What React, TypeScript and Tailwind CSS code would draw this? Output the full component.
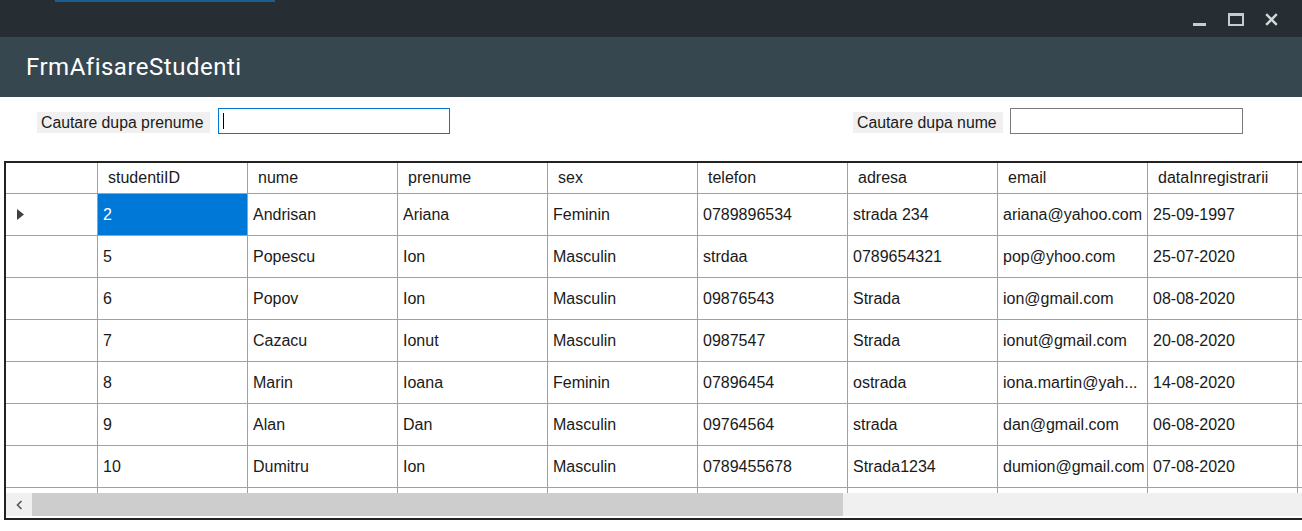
import React from "react";

const cols = ["studentiID", "nume", "prenume", "sex", "telefon", "adresa", "email", "dataInregistrarii"];
const rows = [
  ["2", "Andrisan", "Ariana", "Feminin", "0789896534", "strada 234", "ariana@yahoo.com", "25-09-1997"],
  ["5", "Popescu", "Ion", "Masculin", "strdaa", "0789654321", "pop@yhoo.com", "25-07-2020"],
  ["6", "Popov", "Ion", "Masculin", "09876543", "Strada", "ion@gmail.com", "08-08-2020"],
  ["7", "Cazacu", "Ionut", "Masculin", "0987547", "Strada", "ionut@gmail.com", "20-08-2020"],
  ["8", "Marin", "Ioana", "Feminin", "07896454", "ostrada", "iona.martin@yah...", "14-08-2020"],
  ["9", "Alan", "Dan", "Masculin", "09764564", "strada", "dan@gmail.com", "06-08-2020"],
  ["10", "Dumitru", "Ion", "Masculin", "0789455678", "Strada1234", "dumion@gmail.com", "07-08-2020"],
];

const font = { fontFamily: '"Liberation Sans", Arial, sans-serif' };

export default function App() {
  return (
    <div className="w-[1302px] h-[531px] overflow-hidden bg-white relative flex flex-col" style={font}>
      {/* title bar */}
      <div className="h-[37px] bg-[#262e33] relative flex items-center justify-end shrink-0">
        <div className="absolute left-[55px] top-0 w-[220px] h-[2px] bg-[#1c5f8e]" />
        <div className="flex items-center pr-[24px] pt-[1px]">
          <div className="w-[13px] h-[13px] flex items-end"><div className="w-[13px] h-[3px] bg-[#c8ccce]" /></div>
          <div className="ml-[22px] w-[16px] h-[13px] border-[2px] border-[#c8ccce] border-t-[3px]" />
          <svg className="ml-[21px]" width="13" height="13" viewBox="0 0 13 13"><path d="M1.2 1.2 L11.8 11.8 M11.8 1.2 L1.2 11.8" stroke="#d4d8da" strokeWidth="2.4" /></svg>
        </div>
      </div>
      {/* header */}
      <div className="h-[60px] bg-[#37474f] flex items-center pl-[26px] shrink-0">
        <span className="text-white text-[24px] tracking-[0.5px]" style={{ fontFamily: 'Roboto, "Liberation Sans", sans-serif' }}>FrmAfisareStudenti</span>
      </div>
      {/* search row */}
      <div className="h-[64px] shrink-0 flex items-start pt-[11px] text-[15.8px] text-[#1a1a1a]">
        <div className="ml-[37px] mt-[4px] h-[21px] w-[173px] bg-[#f0f0f0] flex items-center pl-[4px] whitespace-nowrap">Cautare dupa prenume</div>
        <div className="ml-[8px] w-[232px] h-[26px] border border-[#0078d7] flex items-center pl-[4px]">
          <div className="w-[1px] h-[16px] bg-black" />
        </div>
        <div className="ml-[403px] mt-[4px] h-[21px] w-[150px] bg-[#f0f0f0] flex items-center pl-[4px] whitespace-nowrap">Cautare dupa nume</div>
        <div className="ml-[7px] w-[233px] h-[26px] border border-[#7a7a7a]" />
      </div>
      {/* grid */}
      <div className="ml-[4px] w-[1310px] h-[359px] border-t-2 border-l-2 border-b-2 border-[#222] flex flex-col shrink-0 overflow-hidden text-[16px] text-[#1a1a1a]">
        <div className="h-[31px] flex shrink-0 border-b border-[#a0a0a0]">
          <div className="w-[92px] shrink-0 border-r border-[#a0a0a0]" />
          {cols.map((c) => (
            <div key={c} className="w-[150px] shrink-0 border-r border-[#a0a0a0] flex items-center pl-[10px] whitespace-nowrap">{c}</div>
          ))}
        </div>
        {rows.map((r, i) => (
          <div key={i} className="h-[42px] flex shrink-0 border-b border-[#a0a0a0]">
            <div className="w-[92px] shrink-0 border-r border-[#a0a0a0] flex items-center pl-[11px]">
              {i === 0 && (
                <svg width="7" height="11" viewBox="0 0 7 11"><path d="M0 0 L7 5.5 L0 11 Z" fill="#404040" /></svg>
              )}
            </div>
            {r.map((v, j) => (
              <div
                key={j}
                className={
                  i === 0 && j === 0
                    ? "w-[150px] shrink-0 border-r border-[#a0a0a0] flex items-center pl-[5px] bg-[#0078d7] text-white whitespace-nowrap overflow-hidden"
                    : "w-[150px] shrink-0 border-r border-[#a0a0a0] flex items-center pl-[5px] whitespace-nowrap overflow-hidden"
                }
              >
                {v}
              </div>
            ))}
          </div>
        ))}
        <div className="h-[5px] flex shrink-0">
          <div className="w-[92px] shrink-0 border-r border-[#a0a0a0]" />
          {cols.map((c) => (
            <div key={c} className="w-[150px] shrink-0 border-r border-[#a0a0a0]" />
          ))}
        </div>
        <div className="h-[23px] flex shrink-0 bg-[#f0f0f0]">
          <div className="w-[26px] flex items-center justify-center">
            <svg width="7" height="10" viewBox="0 0 7 10"><path d="M5.5 1 L1.5 5 L5.5 9" stroke="#555" strokeWidth="1.6" fill="none" /></svg>
          </div>
          <div className="w-[811px] bg-[#cdcdcd]" />
        </div>
      </div>
    </div>
  );
}
